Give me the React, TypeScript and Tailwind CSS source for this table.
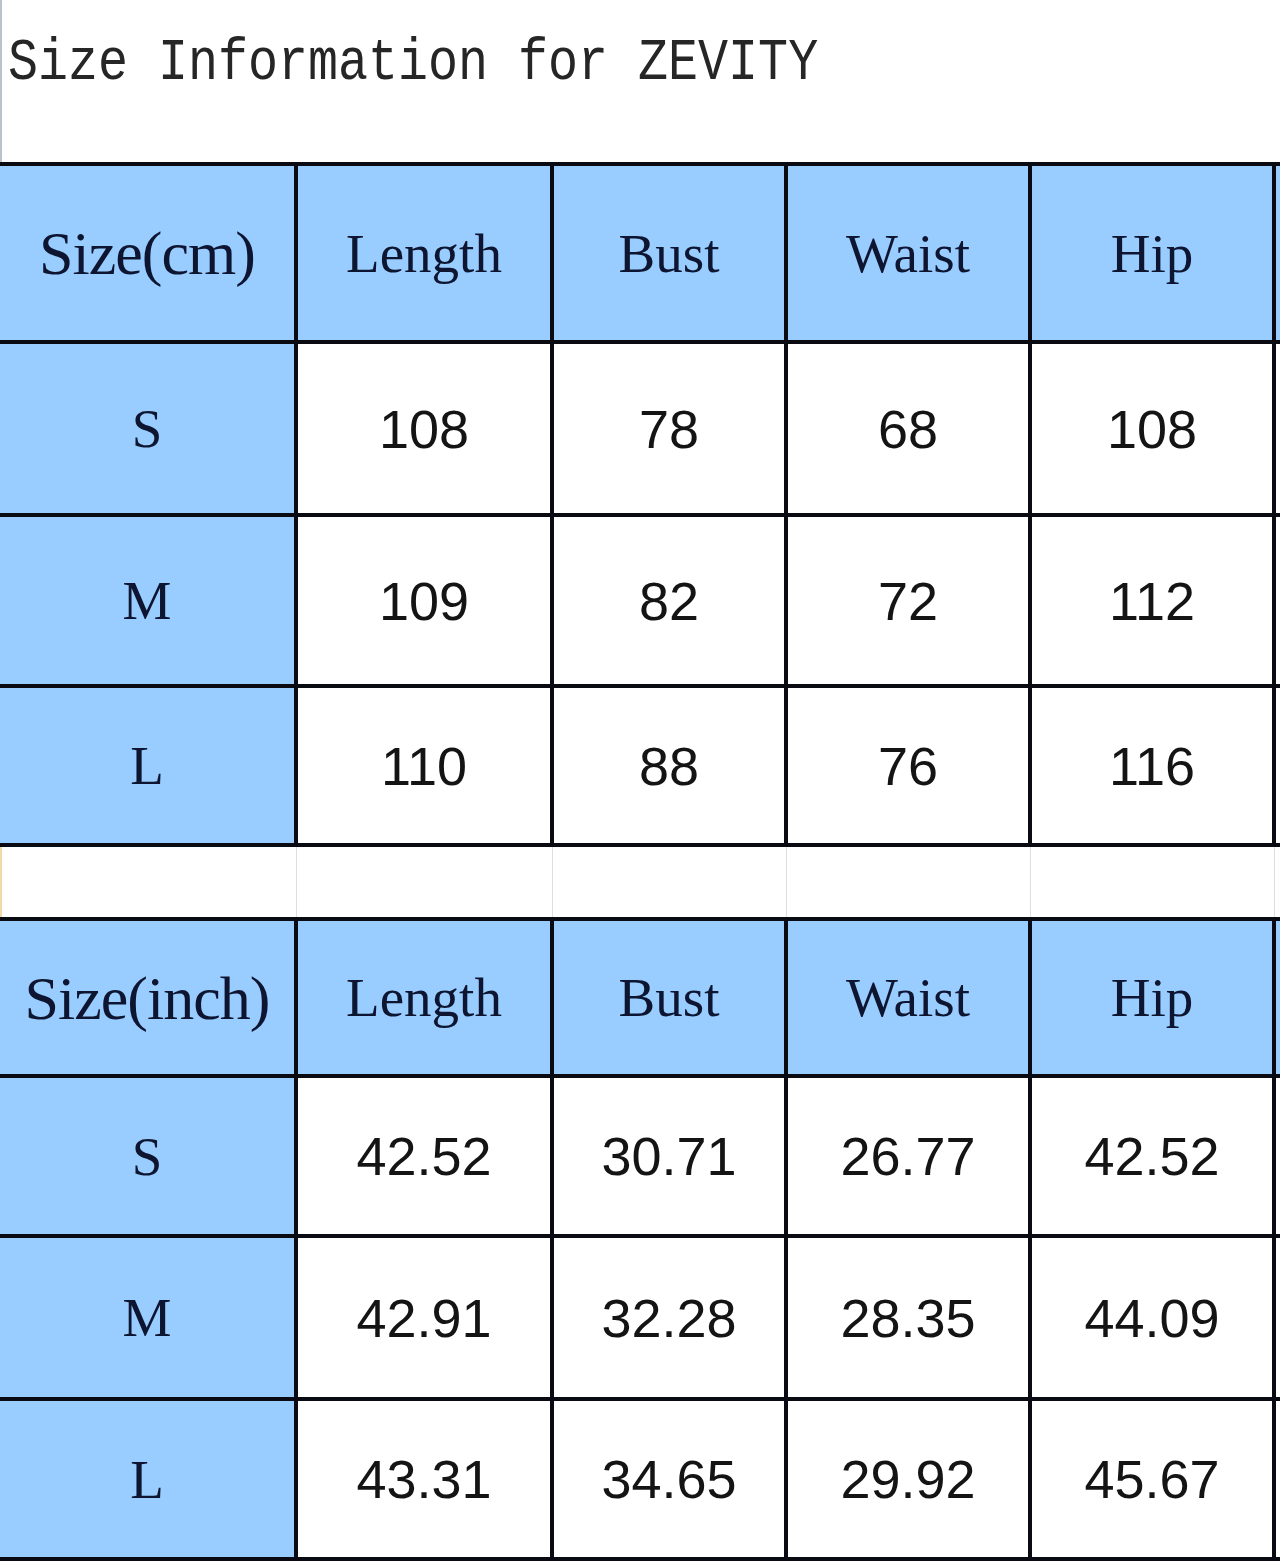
import React from "react";

const BLUE = "bg-[#99ccff]";

type Row = {
  h: string;
  header: boolean;
  cells: string[];
};

const colW = ["w-[298px]", "w-[256px]", "w-[234px]", "w-[244px]", "w-[244px]"];
const gapW = ["w-[294px]", "w-[252px]", "w-[230px]", "w-[240px]", "w-[240px]"];

function DataRow({ row }: { row: Row }) {
  return (
    <div className={`flex ${row.h} border-b-4 border-[#0a0a12]`}>
      {row.cells.map((c, i) => {
        const isFirst = i === 0;
        const blue = row.header || isFirst;
        const serif = row.header || isFirst;
        const size = isFirst && row.header ? "text-[62px] tracking-[-1px]" : serif ? "text-[55px]" : "text-[54px]";
        return (
          <div
            key={i}
            className={`${colW[i]} shrink-0 h-full border-r-4 border-[#0a0a12] flex items-center justify-center ${
              blue ? BLUE : "bg-white"
            } ${serif ? "font-['Liberation_Serif',serif] text-[#0d1530]" : "font-['Liberation_Sans',Arial,sans-serif] text-[#141414]"} ${size} leading-none`}
          >
            {c}
          </div>
        );
      })}
      <div className={`w-[4px] shrink-0 h-full ${row.header ? BLUE : "bg-white"}`} />
    </div>
  );
}

export default function App() {
  const cm: Row[] = [
    { h: "h-[178px]", header: true, cells: ["Size(cm)", "Length", "Bust", "Waist", "Hip"] },
    { h: "h-[173px]", header: false, cells: ["S", "108", "78", "68", "108"] },
    { h: "h-[171px]", header: false, cells: ["M", "109", "82", "72", "112"] },
    { h: "h-[159px]", header: false, cells: ["L", "110", "88", "76", "116"] },
  ];
  const inch: Row[] = [
    { h: "h-[157px]", header: true, cells: ["Size(inch)", "Length", "Bust", "Waist", "Hip"] },
    { h: "h-[160px]", header: false, cells: ["S", "42.52", "30.71", "26.77", "42.52"] },
    { h: "h-[163px]", header: false, cells: ["M", "42.91", "32.28", "28.35", "44.09"] },
    { h: "h-[160px]", header: false, cells: ["L", "43.31", "34.65", "29.92", "45.67"] },
  ];

  return (
    <div className="w-[1280px] h-[1565px] bg-white overflow-hidden">
      <div className="h-[162px] border-l-2 border-[#b9c2cc] pl-[6px] pt-[38px]">
        <div className="inline-block origin-center scale-y-[1.2] font-['Liberation_Mono',monospace] text-[50px] leading-none text-[#262626] whitespace-pre">
          Size Information for ZEVITY
        </div>
      </div>
      <div className="h-[4px] bg-[#0a0a12]" />
      {cm.map((r, i) => (
        <DataRow key={"c" + i} row={r} />
      ))}
      <div className="flex h-[74px] border-b-4 border-[#0a0a12]">
        {gapW.map((w, i) => (
          <React.Fragment key={i}>
            <div className={`${w} shrink-0 h-full bg-white ${i === 0 ? "border-l-2 border-l-[#f2d9a6]" : ""}`} />
            <div className="w-[4px] shrink-0 h-full bg-white flex justify-center">
              <div className="w-px h-full bg-[#dedede]" />
            </div>
          </React.Fragment>
        ))}
        <div className="w-[4px] shrink-0 h-full bg-white" />
      </div>
      {inch.map((r, i) => (
        <DataRow key={"i" + i} row={r} />
      ))}
    </div>
  );
}
